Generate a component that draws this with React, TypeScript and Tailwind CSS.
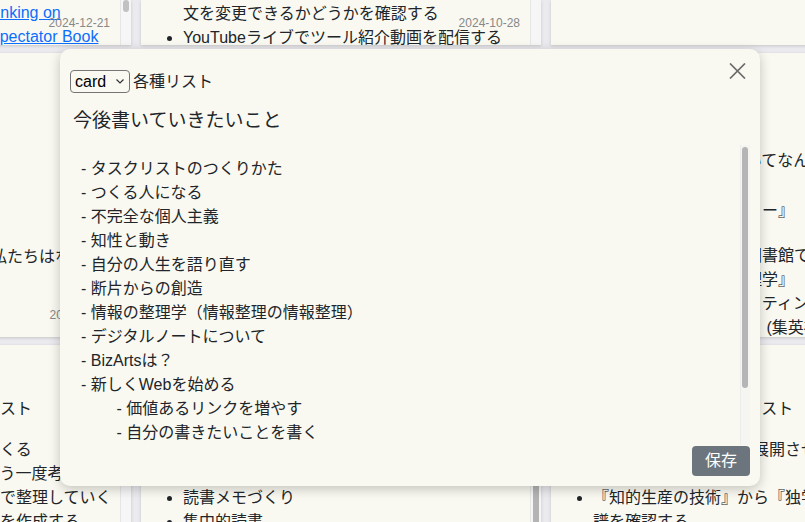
import type { ReactNode } from 'react';

const font = "font-['Liberation_Sans','Noto_Sans_CJK_JP',sans-serif]";

const memo = [
  '- タスクリストのつくりかた',
  '- つくる人になる',
  '- 不完全な個人主義',
  '- 知性と動き',
  '- 自分の人生を語り直す',
  '- 断片からの創造',
  '- 情報の整理学（情報整理の情報整理）',
  '- デジタルノートについて',
  '- BizArtsは？',
  '- 新しくWebを始める',
  '        - 価値あるリンクを増やす',
  '        - 自分の書きたいことを書く',
];

interface CardProps {
  height: string;
  date?: string;
  thumb?: ReactNode;
  children?: ReactNode;
}

function Card({ height, date, thumb, children }: CardProps) {
  return (
    <div className={`flex shrink-0 overflow-hidden bg-[#f9f9f1] shadow-[0_1px_3px_rgba(0,0,0,0.16)] ${height}`}>
      <div className="relative min-w-0 flex-1 overflow-hidden px-[3px] text-[16px] leading-[24px] text-[#212529]">
        {children}
        {date && (
          <span className="absolute bottom-[15px] right-[10px] text-[12px] leading-[14px] text-[#888]">{date}</span>
        )}
      </div>
      <div className="w-[11px] shrink-0 border-l border-[#e6e6e6] bg-[#f6f6f6]">{thumb}</div>
    </div>
  );
}

function Line({ pad, children }: { pad: string; children: ReactNode }) {
  return <div className={`whitespace-nowrap ${pad}`}>{children}</div>;
}

function CloseIcon() {
  return (
    <svg width="17" height="16" viewBox="0 0 17 16" fill="none">
      <path d="M1 0.5L16 15.5M16 0.5L1 15.5" stroke="#6b6b6b" strokeWidth="1.7" />
    </svg>
  );
}

export default function App() {
  return (
    <div className={`relative h-[522px] w-[805px] overflow-hidden bg-[#ebebef] ${font}`}>
      <div className="ml-[-269px] flex gap-[10px]">
        {/* column 1 */}
        <div className="flex w-[400px] shrink-0 flex-col gap-[8px]">
          <Card
            height="h-[45px]"
            date="2024-12-21"
            thumb={<div className="mx-auto h-[12px] w-[6px] rounded-full bg-[#c1c1c1]" />}
          >
            <div className="pt-[1px]">
              <Line pad="pl-[244px]">
                <a className="text-[#0d6efd] underline">Thinking on</a>
              </Line>
              <Line pad="pl-[223px]">
                <a className="text-[#0d6efd] underline">The Spectator Book</a>
              </Line>
            </div>
          </Card>
          <Card height="h-[284px]" date="2024-11-30">
            <div className="pt-[192px]">
              <Line pad="pl-[257px]">私たちはなぜ書くのか</Line>
            </div>
          </Card>
          <Card height="h-[200px]">
            <div className="pt-[52px]">
              <Line pad="pl-[154px]">読書に関するリスト</Line>
            </div>
            <div className="pt-[17px]">
              <Line pad="pl-[170px]">読書メモをつくる</Line>
              <Line pad="pl-[170px]">読んだ本をもう一度考える</Line>
              <Line pad="pl-[218px]">カードで整理していく</Line>
              <Line pad="pl-[234px]">目次を作成する</Line>
            </div>
          </Card>
        </div>

        {/* column 2 */}
        <div className="flex w-[400px] shrink-0 flex-col gap-[8px]">
          <Card height="h-[45px]" date="2024-10-28">
            <ul className="list-disc pl-[39px] pt-[2px]">
              <li className="list-none">文を変更できるかどうかを確認する</li>
              <li>YouTubeライブでツール紹介動画を配信する</li>
            </ul>
          </Card>
          <Card height="h-[284px]" />
          <Card
            height="h-[200px]"
            thumb={<div className="mx-auto mt-[60px] h-[200px] w-[6px] rounded-full bg-[#b4b4b4]" />}
          >
            <ul className="list-disc pl-[39px] pt-[141px]">
              <li>読書メモづくり</li>
              <li>集中的読書</li>
            </ul>
          </Card>
        </div>

        {/* column 3 */}
        <div className="flex w-[400px] shrink-0 flex-col gap-[8px]">
          <Card height="h-[45px]" />
          <Card height="h-[284px]">
            <div className="whitespace-nowrap pt-[96px]">
              <p>そもそも知的生産技術についてなんだろう</p>
              <p className="mt-[26px]">『ノートの取り方ライブラリー』</p>
              <p className="mt-[21px]">読んだ本のリストを作った図書館で予約する</p>
              <p>また外山滋比古『思考の整理学』</p>
              <p>個人ブログのための文章ライティング</p>
              <p>『読書の価値』森博嗣（著） (集英社新書)</p>
            </div>
          </Card>
          <Card height="h-[200px]">
            <p className="whitespace-nowrap pt-[52px]">読書関連の各種アイデアのリスト</p>
            <ul className="list-disc pl-[39px] pt-[17px]">
              <li>読書メモからブログへ展開させる方法を考える</li>
              <li>読書メモを書く</li>
              <li>『知的生産の技術』から『独学大全』までの系譜を確認する</li>
            </ul>
          </Card>
        </div>
      </div>

      {/* modal */}
      <div className="absolute left-[60px] top-[49px] flex h-[437px] w-[700px] flex-col rounded-[10px] bg-[#f9f9f1] px-[10px] pb-[10px] text-[#212529] shadow-[0_3px_12px_rgba(0,0,0,0.22)]">
        <button className="absolute right-[14px] top-[14px]">
          <CloseIcon />
        </button>
        <div className="mt-[21px] flex h-[23px] items-center text-[16px]">
          <div className="flex h-[23px] w-[60px] items-center rounded-[4px] border border-[#767676] pl-[4px]">
            <span className="leading-[20px] text-black">card</span>
            <svg className="ml-[10px]" width="8" height="5" viewBox="0 0 8 5" fill="none">
              <path d="M0.5 0.5L4 4L7.5 0.5" stroke="#333" strokeWidth="1.2" />
            </svg>
          </div>
          <span className="ml-[3px] leading-[23px]">各種リスト</span>
        </div>
        <h3 className="mt-[14px] pl-[3px] text-[19px] leading-[27px]">今後書いていきたいこと</h3>
        <div className="ml-[3px] mt-[11px] flex h-[300px]">
          <div className="min-w-0 flex-1 overflow-hidden whitespace-pre pl-[8px] pt-[12px] text-[16px] leading-[24px]">
            {memo.map((m) => (
              <div key={m}>{m}</div>
            ))}
          </div>
          <div className="w-[10px] shrink-0 border-l border-[#ececec] bg-[#f5f5f2]">
            <div className="ml-[1px] mt-[2px] h-[241px] w-[6px] rounded-full bg-[#b5b5b5]" />
          </div>
        </div>
        <div className="mt-[1px] flex justify-end">
          <button className="h-[30px] w-[58px] rounded-[4px] bg-[#6c757d] text-[16px] text-white">保存</button>
        </div>
      </div>
    </div>
  );
}
